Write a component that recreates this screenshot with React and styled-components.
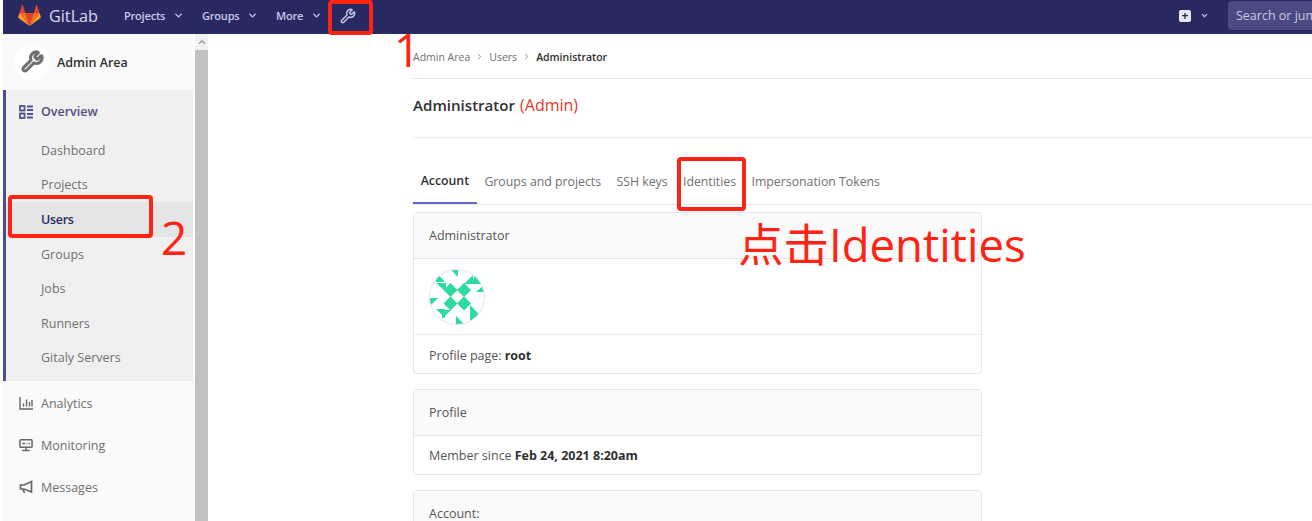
import React from "react";
import styled, { createGlobalStyle } from "styled-components";
import { ChevronDown, ChevronRight, Wrench, ChevronUp } from "lucide-react";

const GlobalStyle = createGlobalStyle`
  html, body {
    margin: 0;
    padding: 0;
    background: #fff;
  }
  body {
    font-family: "Open Sans", "Noto Sans", sans-serif;
    font-size: 12.5px;
    color: #303030;
  }
  * {
    box-sizing: border-box;
  }
`;

const Page = styled.div`
  position: relative;
  width: 1312px;
  height: 521px;
  overflow: hidden;
  padding-left: 3px;
  display: flex;
  flex-direction: column;
`;

const Navbar = styled.div`
  height: 34px;
  flex-shrink: 0;
  background: #292961;
  display: flex;
  align-items: center;
  padding: 0 0 3px 15px;
  color: #c8c8ea;
`;

const Brand = styled.div`
  display: flex;
  align-items: center;
  gap: 8px;
  width: 106px;
  font-size: 16.2px;
  color: #d9d9ee;
  svg {
    display: block;
  }
`;

const NavLink = styled.div`
  display: flex;
  align-items: center;
  gap: 8px;
  width: ${(p) => p.$width}px;
  font-size: 11px;
  font-weight: 600;
  letter-spacing: -0.2px;
  svg {
    flex-shrink: 0;
  }
`;

const NavIcon = styled.div`
  display: flex;
  margin-left: -2px;
`;

const Spacer = styled.div`
  flex: 1;
`;

const NewButton = styled.div`
  display: flex;
  align-items: center;
  gap: 9px;
  width: 49px;
`;

const PlusBox = styled.div`
  width: 12px;
  height: 12px;
  border-radius: 2px;
  background: #e8e8f4;
  color: #292961;
  font-size: 12px;
  font-weight: 700;
  line-height: 11px;
  text-align: center;
`;

const Search = styled.div`
  width: 140px;
  flex-shrink: 0;
  margin-right: -56px;
  height: 29px;
  align-self: flex-start;
  margin-top: 1px;
  border-radius: 4px;
  background: #4a4a82;
  color: #c8c8e2;
  padding: 0 8px;
  font-size: 12.5px;
  line-height: 30px;
  white-space: nowrap;
`;

const Body = styled.div`
  flex: 1;
  display: flex;
  min-height: 0;
`;

const Sidebar = styled.div`
  width: 190px;
  flex-shrink: 0;
  background: #fafafa;
`;

const SidebarHead = styled.div`
  height: 56px;
  display: flex;
  align-items: center;
  gap: 7px;
  padding: 1px 0 0 11px;
  font-weight: 600;
  font-size: 12.5px;
  color: #303030;
`;

const HeadAvatar = styled.div`
  width: 36px;
  height: 36px;
  margin-top: -2px;
  border-radius: 50%;
  background: #fff;
  color: #707070;
  display: flex;
  align-items: center;
  justify-content: center;
`;

const ActiveSection = styled.div`
  height: 291px;
  background: #f0f0f0;
  border-left: 3px solid #4b4ba3;
`;

const SectionTitle = styled.div`
  height: 43px;
  display: flex;
  align-items: center;
  gap: 8px;
  padding-left: 13px;
  color: #4f4f7f;
  font-weight: 600;
`;

const SubItem = styled.div`
  height: 34.6px;
  display: flex;
  align-items: center;
  padding-left: 35px;
  color: ${(p) => (p.$active ? "#292961" : "#707070")};
  font-weight: ${(p) => (p.$active ? 600 : 400)};
  letter-spacing: ${(p) => (p.$active ? "-0.3px" : "0")};
  background: ${(p) => (p.$active ? "#e5e5e5" : "transparent")};
`;

const Menu = styled.div`
  padding-top: 1px;
`;

const MenuItem = styled.div`
  height: 42px;
  display: flex;
  align-items: center;
  gap: 8px;
  padding-left: 16px;
  color: #707070;
  svg {
    flex-shrink: 0;
  }
`;

const Scrollbar = styled.div`
  width: 13px;
  margin-left: 2px;
  flex-shrink: 0;
  background: #f1f1f1;
  display: flex;
  flex-direction: column;
`;

const ScrollArrow = styled.div`
  height: 16px;
  display: flex;
  align-items: center;
  justify-content: center;
  color: #a3a3a3;
`;

const ScrollThumb = styled.div`
  flex: 1;
  background: #c1c1c1;
`;

const Main = styled.div`
  flex: 1;
  min-width: 0;
  padding-left: 205px;
`;

const Breadcrumbs = styled.div`
  height: 45px;
  padding-top: 1px;
  border-bottom: 1px solid #e5e5e5;
  display: flex;
  align-items: center;
  gap: 5px;
  font-size: 10.5px;
  color: #707070;
  strong {
    font-weight: 600;
    color: #303030;
  }
`;

const TitleRow = styled.div`
  height: 59px;
  padding-bottom: 6px;
  border-bottom: 1px solid #ececec;
  display: flex;
  align-items: center;
  font-size: 15.1px;
  font-weight: 600;
  color: #303030;
  span {
    color: #db3b21;
    margin-left: 5px;
    font-size: 16px;
    font-weight: 500;
  }
`;

const Tabs = styled.div`
  margin-top: 26px;
  height: 41px;
  border-bottom: 1px solid #e5e5e5;
  display: flex;
  font-size: 12.3px;
`;

const Tab = styled.div`
  padding: 0 7.7px 6px;
  height: 40px;
  display: flex;
  align-items: center;
  color: ${(p) => (p.$active ? "#303030" : "#707070")};
  font-weight: ${(p) => (p.$active ? 600 : 400)};
  border-bottom: ${(p) => (p.$active ? "2px solid #6666c4" : "none")};
`;

const Card = styled.div`
  width: 569px;
  margin-top: ${(p) => p.$top}px;
  border: 1px solid #e5e5e5;
  border-radius: 4px;
  overflow: hidden;
  background: #fff;
`;

const CardHeader = styled.div`
  height: 46px;
  padding-left: 15px;
  display: flex;
  align-items: center;
  background: #fafafa;
  border-bottom: 1px solid #e5e5e5;
  color: #555;
`;

const CardRow = styled.div`
  height: ${(p) => p.$height}px;
  padding-left: 15px;
  padding-top: ${(p) => (p.$line ? 2 : 0)}px;
  display: flex;
  align-items: center;
  border-top: ${(p) => (p.$line ? "1px solid #eee" : "none")};
  color: #555;
  strong {
    margin-left: 3px;
    font-weight: 700;
    color: #303030;
  }
`;

const Mark = styled.div`
  position: absolute;
  left: ${(p) => p.$x}px;
  top: ${(p) => p.$y}px;
  width: ${(p) => p.$w}px;
  height: ${(p) => p.$h}px;
  border: 4px solid #ff2313;
  border-radius: 4px;
`;

const Note = styled.div`
  position: absolute;
  left: ${(p) => p.$x}px;
  top: ${(p) => p.$y}px;
  font-family: "Open Sans", "Noto Sans CJK SC", sans-serif;
  font-size: ${(p) => p.$size}px;
  line-height: 1;
  color: #ff2313;
  white-space: nowrap;
`;

const Tanuki = () => (
  <svg width="23" height="21" viewBox="0 0 210 194">
    <path fill="#e24329" d="M105.06 193.66L143.7 74.73H66.42z" />
    <path fill="#fc6d26" d="M105.06 193.65L66.42 74.73H12.27z" />
    <path fill="#fca326" d="M12.27 74.73L.53 110.87c-1.07 3.3.1 6.91 2.9 8.95l101.63 73.84z" />
    <path fill="#e24329" d="M12.27 74.73h54.15L43.15 3.1c-1.2-3.68-6.41-3.68-7.61 0z" />
    <path fill="#fc6d26" d="M105.06 193.65l38.64-118.92h54.15z" />
    <path fill="#fca326" d="M197.85 74.73l11.75 36.14c1.07 3.3-.1 6.91-2.9 8.95l-101.64 73.83z" />
    <path fill="#e24329" d="M197.85 74.73h-54.15l23.28-71.63c1.2-3.68 6.41-3.68 7.6 0z" />
  </svg>
);

const OverviewIcon = () => (
  <svg width="14" height="14" viewBox="0 0 14 14" fill="none" stroke="#4f4f8f" strokeWidth="1.8">
    <rect x="1" y="1" width="4.5" height="4.5" />
    <rect x="1" y="8.5" width="4.5" height="4.5" />
    <path d="M8 1.5h6M8 5h6M8 9h6M8 12.5h6" />
  </svg>
);

const AnalyticsIcon = () => (
  <svg width="14" height="14" viewBox="0 0 14 14" fill="none" stroke="#666" strokeWidth="1.4">
    <path d="M1 1v12h13" />
    <path d="M4.5 7.5v3M7.5 3.5v7M10.5 6v4.5M13 4v6.5" />
  </svg>
);

const MonitorIcon = () => (
  <svg width="14" height="14" viewBox="0 0 15 14" fill="none" stroke="#666" strokeWidth="1.6">
    <rect x="1" y="1.5" width="13" height="8" rx="1" />
    <path d="M3.5 5.5h3M8 5.5h1M10.5 5.5h1.5M7.5 10v2.5M3.5 13h8" />
  </svg>
);

const MegaphoneIcon = () => (
  <svg width="14" height="14" viewBox="0 0 14 14" fill="none" stroke="#666" strokeWidth="1.7">
    <path d="M12.5 1.5v10.5L5 9H1.5V5H5z" />
    <path d="M4 9.5l1.5 3.5" />
  </svg>
);

// identicon of the root user, coordinates in the 56px box
const triangles = [
  "21,0 29,0 29,8",
  "7,3 16,13 7,13",
  "7,14 17,14 17,23",
  "35,15 44,15 44,6",
  "43,15 53,15 46,5",
  "47,23 56,23 56,15",
  "0,29 9,29 0,38",
  "7,40 16,40 16,49",
  "13,41 22,41 13,50",
  "41,36 41,46 51,46",
  "41,45 51,45 41,54",
  "27,47 36,56 27,56",
];

const Identicon = () => (
  <svg width="56" height="56" viewBox="0 0 56 56">
    <defs>
      <clipPath id="avatar-clip">
        <circle cx="28" cy="28" r="27.5" />
      </clipPath>
    </defs>
    <g clipPath="url(#avatar-clip)" fill="#2ddb9c">
      {triangles.map((t) => (
        <polygon key={t} points={t} />
      ))}
      <polygon points="21.5,14 28.5,21 21.5,28 14.5,21" />
      <polygon points="35,14 42,21 35,28 28,21" />
      <polygon points="21.5,27.5 28.5,34.5 21.5,41.5 14.5,34.5" />
      <polygon points="35,27.5 42,34.5 35,41.5 28,34.5" />
    </g>
    <circle cx="28" cy="28" r="27.5" fill="none" stroke="#e5e5e5" />
  </svg>
);

const subItems = ["Dashboard", "Projects", "Users", "Groups", "Jobs", "Runners", "Gitaly Servers"];

export default function App() {
  return (
    <Page>
      <GlobalStyle />
      <Navbar>
        <Brand>
          <Tanuki />
          GitLab
        </Brand>
        <NavLink $width={78}>
          Projects <ChevronDown size={11} strokeWidth={3} />
        </NavLink>
        <NavLink $width={74}>
          Groups <ChevronDown size={11} strokeWidth={3} />
        </NavLink>
        <NavLink $width={66}>
          More <ChevronDown size={11} strokeWidth={3} />
        </NavLink>
        <NavIcon>
          <Wrench size={16} strokeWidth={2.2} />
        </NavIcon>
        <Spacer />
        <NewButton>
          <PlusBox>+</PlusBox>
          <ChevronDown size={9} strokeWidth={3.5} />
        </NewButton>
        <Search>Search or jump to</Search>
      </Navbar>
      <Body>
        <Sidebar>
          <SidebarHead>
            <HeadAvatar>
              <Wrench size={23} strokeWidth={3.2} />
            </HeadAvatar>
            Admin Area
          </SidebarHead>
          <ActiveSection>
            <SectionTitle>
              <OverviewIcon />
              Overview
            </SectionTitle>
            {subItems.map((name) => (
              <SubItem key={name} $active={name === "Users"}>
                {name}
              </SubItem>
            ))}
          </ActiveSection>
          <Menu>
            <MenuItem>
              <AnalyticsIcon />
              Analytics
            </MenuItem>
            <MenuItem>
              <MonitorIcon />
              Monitoring
            </MenuItem>
            <MenuItem>
              <MegaphoneIcon />
              Messages
            </MenuItem>
          </Menu>
        </Sidebar>
        <Scrollbar>
          <ScrollArrow>
            <ChevronUp size={10} strokeWidth={4} />
          </ScrollArrow>
          <ScrollThumb />
        </Scrollbar>
        <Main>
          <Breadcrumbs>
            Admin Area <ChevronRight size={9} /> Users <ChevronRight size={9} />
            <strong>Administrator</strong>
          </Breadcrumbs>
          <TitleRow>
            Administrator <span>(Admin)</span>
          </TitleRow>
          <Tabs>
            <Tab $active>Account</Tab>
            <Tab>Groups and projects</Tab>
            <Tab>SSH keys</Tab>
            <Tab>Identities</Tab>
            <Tab>Impersonation Tokens</Tab>
          </Tabs>
          <Card $top={7}>
            <CardHeader>Administrator</CardHeader>
            <CardRow $height={75}>
              <Identicon />
            </CardRow>
            <CardRow $height={39} $line>
              Profile page: <strong>root</strong>
            </CardRow>
          </Card>
          <Card $top={15}>
            <CardHeader>Profile</CardHeader>
            <CardRow $height={38}>
              Member since <strong>Feb 24, 2021 8:20am</strong>
            </CardRow>
          </Card>
          <Card $top={15}>
            <CardHeader>Account:</CardHeader>
          </Card>
        </Main>
      </Body>
      <Mark $x={328} $y={0} $w={45} $h={35} />
      <Mark $x={8} $y={195} $w={145} $h={43} />
      <Mark $x={677} $y={157} $w={69} $h={54} />
      <Note $x={394} $y={26} $size={46}>1</Note>
      <Note $x={161} $y={214} $size={46}>2</Note>
      <Note $x={738} $y={222} $size={45.5}>点击Identities</Note>
    </Page>
  );
}
